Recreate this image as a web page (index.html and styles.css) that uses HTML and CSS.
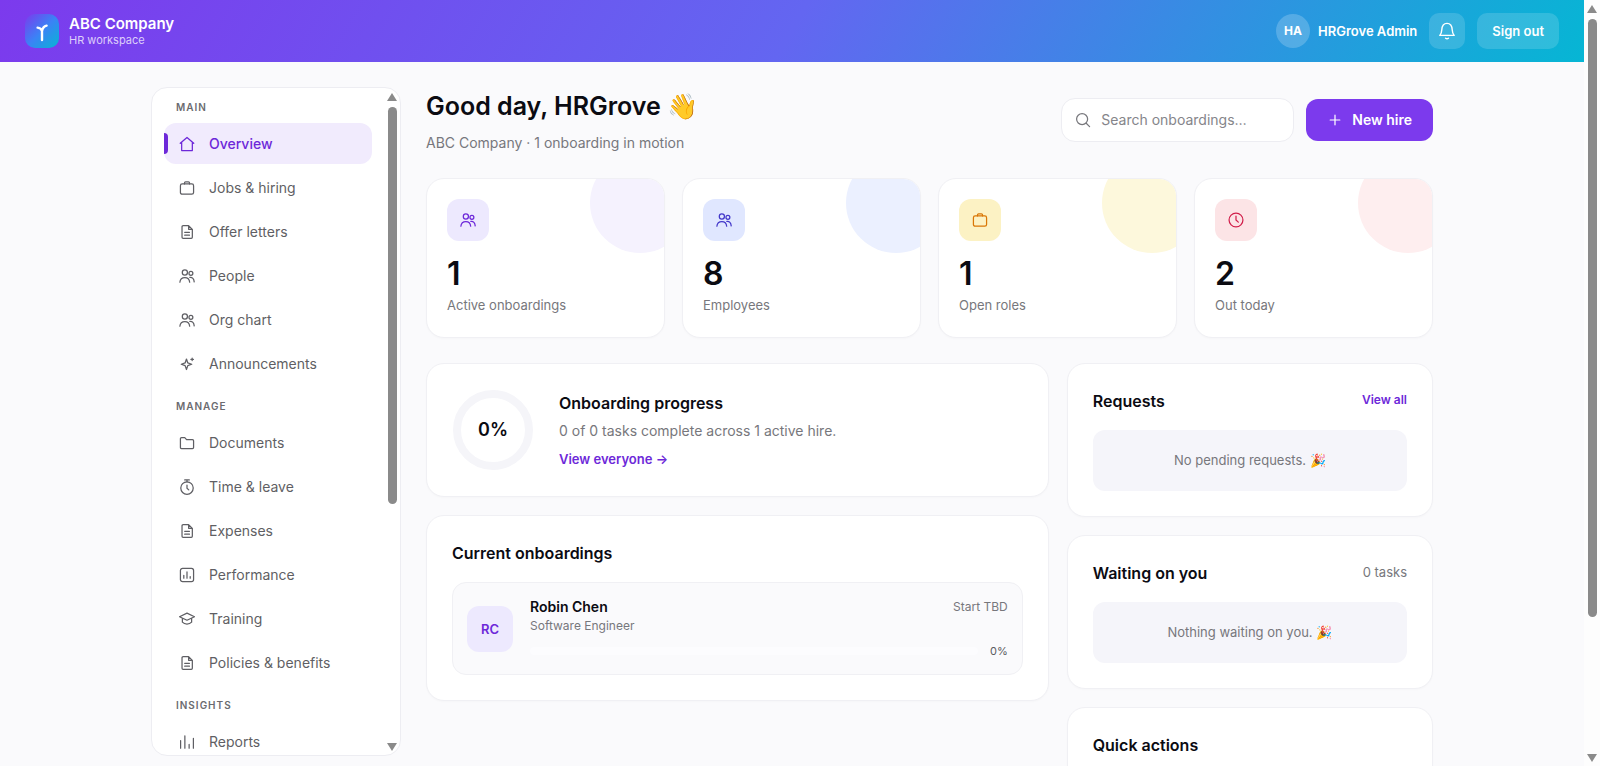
FILE: index.html
```html
<!DOCTYPE html>
<html lang="en">
<head>
    <meta charset="UTF-8">
    <meta name="viewport" content="width=device-width, initial-scale=1.0">
    <title>ABC Company - HR workspace</title>
    <link rel="stylesheet" href="styles.css">
</head>
<body>
    <!-- icon set -->
    <svg class="sprite" aria-hidden="true">
        <symbol id="i-home" viewBox="0 0 18 18"><path d="M1.400 8.200 9 1.600l7.600 6.600M3 7v9.400h12V7"/></symbol>
        <symbol id="i-case" viewBox="0 0 18 18"><rect x="1.600" y="4.400" width="14.800" height="11.600" rx="2"/><path d="M6.200 4.400V3.200c0-.7.5-1.200 1.200-1.200h3.200c.7 0 1.200.5 1.200 1.200v1.200"/></symbol>
        <symbol id="i-doc" viewBox="0 0 18 18"><path d="M10.800 1.800H4.600c-.7 0-1.200.5-1.200 1.200v12c0 .7.5 1.200 1.200 1.200h9.200c.7 0 1.200-.5 1.200-1.200V6zM10.800 1.800V6H15M6.400 9.400h5.400M6.400 12.600h5.400"/></symbol>
        <symbol id="i-people" viewBox="0 0 18 18"><circle cx="6.600" cy="5" r="2.900"/><circle cx="13.400" cy="6" r="2.200"/><path d="M1 16c.3-3.400 2.400-5.200 5.600-5.200s5.100 1.800 5.400 5.200M12.200 10.600c2.900-.3 4.600 1.600 4.900 5"/></symbol>
        <symbol id="i-spark" viewBox="0 0 18 18"><path d="M8.400 3.400 9.900 7.800 14.300 9.300 9.900 10.800 8.400 15.200 6.900 10.800 2.500 9.300 6.900 7.800zM14.800 2.400v2.800M13.400 3.800h2.800"/></symbol>
        <symbol id="i-folder" viewBox="0 0 18 18"><path d="M1.600 4.200c0-.7.5-1.200 1.200-1.200h3.700l2 2.200h6.700c.7 0 1.200.5 1.200 1.200v7.800c0 .7-.5 1.200-1.200 1.200H2.800c-.7 0-1.200-.5-1.200-1.200z"/></symbol>
        <symbol id="i-timer" viewBox="0 0 18 18"><circle cx="9" cy="10.200" r="7"/><path d="M6.400 1h5.200M9 1v2.200M9 6.800v3.600l2 1.800"/></symbol>
        <symbol id="i-perf" viewBox="0 0 18 18"><rect x="1.600" y="1.600" width="14.800" height="14.800" rx="2.400"/><path d="M5.400 12.600V9.400M9 12.600V5.600M12.600 12.600v-1.800"/></symbol>
        <symbol id="i-cap" viewBox="0 0 18 18"><path d="M9 2.400 17.400 6.400 9 10.400.6 6.400zM3.800 8.200v4.400c2.600 2.800 7.800 2.800 10.400 0V8.200"/></symbol>
        <symbol id="i-bars" viewBox="0 0 18 18"><path d="M1.800 16V7.400M6.600 16V2M11.400 16v-4.200M16.200 16V5"/></symbol>
        <symbol id="i-clock" viewBox="0 0 18 18"><circle cx="9" cy="9" r="7.800"/><path d="M9 4.600V9l2.600 2.400"/></symbol>
        <symbol id="i-bell" viewBox="0 0 18 18"><path d="M1.800 13.400h14.400c-1.500-1.600-1.900-3.200-2-5.600C14 3.800 12 1.400 9 1.400S4 3.800 3.800 7.800c-.1 2.400-.5 4-2 5.600zM7.600 16.200c.8.700 2 .7 2.800 0"/></symbol>
        <symbol id="i-search" viewBox="0 0 18 18"><circle cx="8" cy="8" r="6.200"/><path d="m12.600 12.600 3.800 3.800"/></symbol>
        <symbol id="i-plus" viewBox="0 0 18 18"><path d="M9 3.600v10.800M3.600 9h10.800"/></symbol>
        <symbol id="i-up" viewBox="0 0 10 8"><path d="M5 0 10 8H0z"/></symbol>
        <symbol id="i-down" viewBox="0 0 10 8"><path d="M5 8 0 0h10z"/></symbol>
    </svg>

    <div class="page">
        <header class="topbar">
            <div class="logo">
                <svg viewBox="0 0 34 34"><path d="M17 26V16.500M17 17c-.6-2-2.200-3.200-4.400-3.400M17 17c.6-3 2-4.800 4.600-5.400"/></svg>
            </div>
            <div class="brand">
                <strong>ABC Company</strong>
                <span>HR workspace</span>
            </div>
            <div class="account">
                <span class="avatar">HA</span>
                <span class="user">HRGrove Admin</span>
                <button class="bell" aria-label="Notifications"><svg class="icon"><use href="#i-bell"/></svg></button>
                <button class="signout">Sign out</button>
            </div>
        </header>

        <div class="layout">
            <aside class="sidebar">
                <nav class="nav">
                    <section>
                        <h2>Main</h2>
                        <a class="active" href="#"><svg class="icon"><use href="#i-home"/></svg>Overview</a>
                        <a href="#"><svg class="icon"><use href="#i-case"/></svg>Jobs &amp; hiring</a>
                        <a href="#"><svg class="icon"><use href="#i-doc"/></svg>Offer letters</a>
                        <a href="#"><svg class="icon"><use href="#i-people"/></svg>People</a>
                        <a href="#"><svg class="icon"><use href="#i-people"/></svg>Org chart</a>
                        <a href="#"><svg class="icon"><use href="#i-spark"/></svg>Announcements</a>
                    </section>
                    <section>
                        <h2>Manage</h2>
                        <a href="#"><svg class="icon"><use href="#i-folder"/></svg>Documents</a>
                        <a href="#"><svg class="icon"><use href="#i-timer"/></svg>Time &amp; leave</a>
                        <a href="#"><svg class="icon"><use href="#i-doc"/></svg>Expenses</a>
                        <a href="#"><svg class="icon"><use href="#i-perf"/></svg>Performance</a>
                        <a href="#"><svg class="icon"><use href="#i-cap"/></svg>Training</a>
                        <a href="#"><svg class="icon"><use href="#i-doc"/></svg>Policies &amp; benefits</a>
                    </section>
                    <section>
                        <h2>Insights</h2>
                        <a href="#"><svg class="icon"><use href="#i-bars"/></svg>Reports</a>
                    </section>
                </nav>
                <div class="rail">
                    <svg><use href="#i-up"/></svg>
                    <div class="track"><div class="thumb thumb-nav"></div></div>
                    <svg><use href="#i-down"/></svg>
                </div>
            </aside>

            <main class="main">
                <div class="head">
                    <div class="greeting">
                        <h1>Good day, HRGrove 👋</h1>
                        <p>ABC Company · 1 onboarding in motion</p>
                    </div>
                    <label class="search">
                        <svg class="icon"><use href="#i-search"/></svg>
                        <input type="search" placeholder="Search onboardings…" aria-label="Search onboardings">
                    </label>
                    <button class="new-hire"><svg class="icon"><use href="#i-plus"/></svg>New hire</button>
                </div>

                <div class="stats">
                    <div class="card stat violet">
                        <div class="stat-icon"><svg class="icon"><use href="#i-people"/></svg></div>
                        <strong>1</strong>
                        <span>Active onboardings</span>
                    </div>
                    <div class="card stat blue">
                        <div class="stat-icon"><svg class="icon"><use href="#i-people"/></svg></div>
                        <strong>8</strong>
                        <span>Employees</span>
                    </div>
                    <div class="card stat yellow">
                        <div class="stat-icon"><svg class="icon"><use href="#i-case"/></svg></div>
                        <strong>1</strong>
                        <span>Open roles</span>
                    </div>
                    <div class="card stat red">
                        <div class="stat-icon"><svg class="icon"><use href="#i-clock"/></svg></div>
                        <strong>2</strong>
                        <span>Out today</span>
                    </div>
                </div>

                <div class="columns">
                    <div class="column">
                        <section class="card progress">
                            <div class="ring">0%</div>
                            <div class="progress-text">
                                <h3>Onboarding progress</h3>
                                <p>0 of 0 tasks complete across 1 active hire.</p>
                                <a href="#">View everyone →</a>
                            </div>
                        </section>
                        <section class="card panel">
                            <h3>Current onboardings</h3>
                            <div class="hire">
                                <span class="initials">RC</span>
                                <div class="hire-info">
                                    <div class="hire-row">
                                        <strong>Robin Chen</strong>
                                        <span>Start TBD</span>
                                    </div>
                                    <p>Software Engineer</p>
                                    <div class="hire-row">
                                        <div class="bar"></div>
                                        <span class="percent">0%</span>
                                    </div>
                                </div>
                            </div>
                        </section>
                    </div>
                    <div class="column">
                        <section class="card panel">
                            <div class="panel-head">
                                <h3>Requests</h3>
                                <a href="#">View all</a>
                            </div>
                            <p class="empty">No pending requests. 🎉</p>
                        </section>
                        <section class="card panel">
                            <div class="panel-head">
                                <h3>Waiting on you</h3>
                                <span>0 tasks</span>
                            </div>
                            <p class="empty">Nothing waiting on you. 🎉</p>
                        </section>
                        <section class="card panel quick">
                            <div class="panel-head">
                                <h3>Quick actions</h3>
                            </div>
                        </section>
                    </div>
                </div>
            </main>
        </div>
    </div>
    <div class="rail rail-page">
        <svg><use href="#i-up"/></svg>
        <div class="track"><div class="thumb thumb-page"></div></div>
        <svg><use href="#i-down"/></svg>
    </div>
</body>
</html>
```
FILE: styles.css
```css
* {
    box-sizing: border-box;
}
body {
    display: flex;
    height: 100vh;
    margin: 0;
    overflow: hidden;
    background-color: #fafafc;
    color: #0b0b12;
    font-family: Inter, "Liberation Sans", sans-serif;
    font-size: 14px;
    line-height: 20px;
}
h1, h2, h3, p {
    margin: 0;
}
a {
    color: #6d28d9;
    text-decoration: none;
}
button, input {
    font: inherit;
}
button {
    border: none;
    cursor: pointer;
}
.sprite {
    position: absolute;
    width: 0;
    height: 0;
}
.icon {
    flex: none;
    width: 16px;
    height: 16px;
    fill: none;
    stroke: currentColor;
    stroke-width: 1.4;
    stroke-linecap: round;
    stroke-linejoin: round;
}
.page {
    display: flex;
    flex: 1;
    flex-direction: column;
    min-width: 0;
}

/* top bar */
.topbar {
    display: flex;
    flex: none;
    align-items: center;
    height: 62px;
    padding: 0 25px;
    background: linear-gradient(120deg, #7c3aed 0%, #6366f1 50%, #06b6d4 100%);
    color: #fff;
}
.logo {
    width: 34px;
    height: 34px;
    border-radius: 10px;
    background: linear-gradient(135deg, #7c3aed, #3b82f6 50%, #06b6d4);
}
.logo svg {
    display: block;
    fill: none;
    stroke: #fff;
    stroke-width: 2.4;
    stroke-linecap: round;
    stroke-linejoin: round;
}
.brand {
    display: flex;
    flex-direction: column;
    margin-left: 10px;
}
.brand strong {
    font-size: 15px;
    font-weight: 600;
    line-height: 18px;
}
.brand span {
    color: rgba(255, 255, 255, 0.75);
    font-size: 11px;
    line-height: 14px;
}
.account {
    display: flex;
    align-items: center;
    margin-left: auto;
}
.avatar {
    width: 34px;
    height: 34px;
    border-radius: 50%;
    background-color: rgba(255, 255, 255, 0.2);
    font-size: 12px;
    font-weight: 700;
    line-height: 34px;
    text-align: center;
}
.user {
    margin: 0 12px 0 8px;
    font-size: 13px;
    font-weight: 600;
}
.bell,
.signout {
    height: 36px;
    border-radius: 10px;
    background-color: rgba(255, 255, 255, 0.15);
    color: #fff;
}
.bell {
    display: flex;
    align-items: center;
    justify-content: center;
    width: 36px;
    margin-right: 12px;
    padding: 0;
}
.bell .icon {
    width: 18px;
    height: 18px;
}
.signout {
    padding: 0 15px;
    font-size: 13px;
    font-weight: 600;
}

/* page grid */
.layout {
    display: grid;
    flex: 1;
    grid-template-columns: 250px minmax(0, 1fr);
    grid-template-rows: minmax(0, 1fr);
    gap: 25px;
    width: 100%;
    max-width: 1332px;
    min-height: 0;
    margin: 0 auto;
    padding: 25px 25px 0;
}

/* sidebar */
.sidebar {
    display: flex;
    margin-bottom: 10px;
    overflow: hidden;
    border: 1px solid #ededf2;
    border-radius: 16px;
    background-color: #fff;
}
.nav {
    display: flex;
    flex: 1;
    flex-direction: column;
    gap: 15px;
    padding: 12px 12px 0;
}
.nav section {
    display: flex;
    flex-direction: column;
    gap: 3px;
}
.nav h2 {
    margin-bottom: 5px;
    padding-left: 12px;
    color: #6b6b70;
    font-size: 10px;
    font-weight: 600;
    letter-spacing: 1px;
    line-height: 15px;
    text-transform: uppercase;
}
.nav a {
    display: flex;
    flex: none;
    align-items: center;
    gap: 14px;
    height: 41px;
    padding-left: 15px;
    border-radius: 12px;
    color: #5f5f64;
}
.nav .active {
    position: relative;
    background-color: #f1ebfd;
    color: #6d28d9;
    font-weight: 500;
}
.nav .active::before {
    content: "";
    position: absolute;
    left: 0;
    width: 4px;
    height: 21px;
    border-radius: 0 4px 4px 0;
    background-color: #6d28d9;
}

/* scroll rails */
.rail {
    display: flex;
    flex: none;
    flex-direction: column;
    align-items: center;
    width: 16px;
    padding: 5px 0 4px;
}
.rail svg {
    flex: none;
    width: 10px;
    height: 8px;
    fill: #8a8a8a;
}
.track {
    flex: 1;
    width: 9px;
    padding: 6px 0;
}
.thumb {
    border-radius: 5px;
    background-color: #8a8a8a;
}
.thumb-nav {
    height: 63%;
}
.thumb-page {
    height: 82%;
}
.rail-page {
    background-color: #fdfdfd;
}

/* greeting row */
.main {
    min-width: 0;
}
.head {
    display: flex;
    align-items: center;
    height: 66px;
}
.greeting {
    margin-right: auto;
}
.greeting h1 {
    margin-bottom: 8px;
    font-size: 25px;
    font-weight: 600;
    line-height: 38px;
}
.greeting p {
    color: #77777c;
}
.search {
    display: flex;
    align-items: center;
    gap: 10px;
    width: 233px;
    height: 44px;
    margin-right: 12px;
    padding: 0 13px;
    border: 1px solid #ededf2;
    border-radius: 14px;
    background-color: #fff;
    color: #77777c;
}
.search input {
    flex: 1;
    min-width: 0;
    padding: 0;
    border: none;
    outline: none;
    background: none;
}
.search input::placeholder {
    color: #85858a;
}
.new-hire {
    display: flex;
    align-items: center;
    gap: 9px;
    height: 42px;
    padding: 0 21px;
    border-radius: 12px;
    background-color: #7c3aed;
    color: #fff;
    font-weight: 600;
}

/* cards */
.card {
    border: 1px solid #f0f0f4;
    border-radius: 18px;
    background-color: #fff;
    box-shadow: 0 1px 2px rgba(20, 20, 50, 0.02);
}
.stats {
    display: grid;
    grid-template-columns: repeat(4, minmax(0, 1fr));
    gap: 17px;
    margin: 25px 0;
}
.stat {
    display: flex;
    position: relative;
    flex-direction: column;
    height: 160px;
    padding: 20px;
    overflow: hidden;
}
.stat::after {
    content: "";
    position: absolute;
    top: -26px;
    right: -26px;
    width: 100px;
    height: 100px;
    border-radius: 50%;
    background-color: var(--soft);
}
.stat-icon {
    display: flex;
    align-items: center;
    justify-content: center;
    width: 42px;
    height: 42px;
    border-radius: 12px;
    background-color: var(--tint);
    color: var(--ink);
}
.stat strong {
    margin: 16px 0 6px;
    font-size: 32px;
    font-weight: 600;
    line-height: 34px;
}
.stat span {
    color: #77777c;
    font-size: 13px;
    line-height: 16px;
}
.violet {
    --soft: #f5f2fe;
    --tint: #ede9fe;
    --ink: #6d28d9;
}
.blue {
    --soft: #ebf0ff;
    --tint: #e0e7ff;
    --ink: #4338ca;
}
.yellow {
    --soft: #fdf8dc;
    --tint: #fcf2c4;
    --ink: #d97706;
}
.red {
    --soft: #feeeef;
    --tint: #fce4e6;
    --ink: #d11f4b;
}

/* columns */
.columns {
    display: grid;
    grid-template-columns: minmax(0, 17fr) minmax(0, 10fr);
    align-items: start;
    gap: 18px;
}
.column {
    display: flex;
    flex-direction: column;
    gap: 18px;
}
h3 {
    color: #0b0b12;
    font-size: 16px;
    font-weight: 600;
    line-height: 24px;
}
.progress {
    display: flex;
    align-items: center;
    gap: 26px;
    padding: 26px;
}
.ring {
    width: 80px;
    height: 80px;
    border: 8px solid #f5f5f9;
    border-radius: 50%;
    font-size: 18px;
    font-weight: 600;
    line-height: 64px;
    text-align: center;
}
.progress-text h3 {
    margin-bottom: 6px;
}
.progress-text p {
    margin-bottom: 8px;
    color: #77777c;
}
.progress-text a {
    font-size: 13px;
    font-weight: 600;
}
.panel {
    padding: 25px;
}
.panel h3 {
    margin-bottom: 17px;
}
.panel-head {
    display: flex;
    justify-content: space-between;
    color: #77777c;
    font-size: 13px;
    line-height: 22px;
}
.panel-head a {
    font-size: 12px;
    font-weight: 600;
}
.empty {
    padding: 20px;
    border-radius: 12px;
    background-color: #f5f5fa;
    color: #77777c;
    font-size: 13px;
    line-height: 21px;
    text-align: center;
}
.hire {
    display: flex;
    align-items: center;
    gap: 17px;
    padding: 14px;
    border: 1px solid #f0f0f4;
    border-radius: 14px;
    background-color: #fafafc;
}
.initials {
    width: 46px;
    height: 46px;
    border-radius: 12px;
    background-color: #ede9fe;
    color: #6d28d9;
    font-size: 13px;
    font-weight: 600;
    line-height: 46px;
    text-align: center;
}
.hire-info {
    flex: 1;
}
.hire-row {
    display: flex;
    align-items: center;
    gap: 12px;
    justify-content: space-between;
    color: #77777c;
    font-size: 12px;
}
.hire-row strong {
    color: #0b0b12;
    font-size: 14px;
    font-weight: 600;
}
.hire-info p {
    margin-bottom: 8px;
    color: #77777c;
    font-size: 12px;
    line-height: 17px;
}
.bar {
    flex: 1;
    height: 8px;
    border-radius: 4px;
    background-color: #fcfcfe;
}
.hire-row .percent {
    color: #5b5b60;
    font-size: 11px;
    line-height: 18px;
}
.quick {
    height: 180px;
}
```
